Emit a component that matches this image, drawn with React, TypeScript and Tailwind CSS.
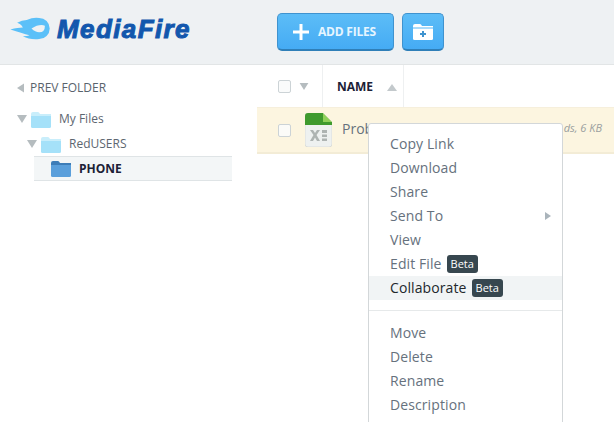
const font = { fontFamily: '"Open Sans", sans-serif' };

function Folder({ color, tab, className }: { color: string; tab: string; className: string }) {
  return (
    <svg viewBox="0 0 20 17" className={className}>
      <path d="M0 3 Q0 1 2 1 H7 Q8 1 9 3 H20 V5 H0 Z" fill={tab} />
      <path d="M0 5 H20 V15.5 Q20 17 18.5 17 H1.5 Q0 17 0 15.5 Z" fill={color} />
    </svg>
  );
}

function Down({ className }: { className: string }) {
  return (
    <svg viewBox="0 0 10 8" className={className}>
      <path d="M0 0 H10 L5 8 Z" fill="#b5bcbf" />
    </svg>
  );
}

function Beta() {
  return (
    <span className="ml-[5px] rounded-[3px] bg-[#37474f] px-[4px] h-[18px] leading-[18px] text-[11px] tracking-normal text-white">
      Beta
    </span>
  );
}

function MenuItem({ label, beta, arrow, active }: { label: string; beta?: boolean; arrow?: boolean; active?: boolean }) {
  return (
    <div
      className={`flex items-center h-6 pl-[21px] pr-[11px] text-[14px] tracking-[0.1px] ${
        active ? "bg-[#f1f4f5] text-[#22282c]" : "text-[#66717d]"
      }`}
    >
      <span className="pb-[2px]">{label}</span>
      {beta && <Beta />}
      {arrow && (
        <svg viewBox="0 0 6 8" className="ml-auto w-[6px] h-[8px]">
          <path d="M0 0 L6 4 L0 8 Z" fill="#aab4bb" />
        </svg>
      )}
    </div>
  );
}

export default function App() {
  return (
    <div className="relative w-[614px] h-[422px] overflow-hidden bg-white" style={font}>
      <header className="flex items-center h-[65px] bg-[#eef1f3] border-b border-[#e2e5e6]">
        <div className="flex items-center w-[277px] pl-[10px] pb-[7px]">
          <svg viewBox="0 0 44 24" className="w-[43px] h-[23px] shrink-0">
            <path
              d="M17 3 Q24 0 30 1 A11 11 0 1 1 30 23 Q20 24 13 20 Q18 20 20 19 Q12 17 0 13 Q8 11 13 11 Q11 7 7 6 Q12 3 17 3 Z"
              fill="#5bc0f8"
            />
            <path d="M22 12 Q30 7 36 9 Q36 16 30 16 Q26 16 22 12 Z" fill="#eef1f3" />
          </svg>
          <span
            className="ml-[4px] text-[26px] leading-none font-bold italic text-[#1257ad] tracking-[1.4px]"
            style={{ fontFamily: '"Liberation Sans", sans-serif', WebkitTextStroke: "1px #1257ad" }}
          >
            MediaFire
          </span>
        </div>
        <button className="flex items-center w-[117px] h-[38px] pl-[15px] rounded-[5px] border border-[#3f93cf] border-b-2 border-b-[#2f7fb8] bg-gradient-to-b from-[#5cbdf7] to-[#45abf4] text-white">
          <svg viewBox="0 0 16 16" className="w-[16px] h-[16px]">
            <path d="M6.5 0 H9.5 V6.5 H16 V9.5 H9.5 V16 H6.5 V9.5 H0 V6.5 H6.5 Z" fill="#fff" />
          </svg>
          <span className="ml-[9px] text-[12px] font-bold text-[#e6f5ff] tracking-[-0.2px]">ADD FILES</span>
        </button>
        <button className="flex items-center justify-center ml-2 w-[42px] h-[38px] rounded-[5px] border border-[#3f93cf] border-b-2 border-b-[#2f7fb8] bg-gradient-to-b from-[#5cbdf7] to-[#45abf4]">
          <svg viewBox="0 0 20 17" className="w-[20px] h-[17px]">
            <path d="M0 3 Q0 1 2 1 H7 Q8 1 9 3 H20 V4.5 H0 Z" fill="#fff" />
            <path d="M0 5.5 H20 V15.5 Q20 17 18.5 17 H1.5 Q0 17 0 15.5 Z" fill="#fff" />
            <path d="M9 8 H11 V10 H13 V12 H11 V14 H9 V12 H7 V10 H9 Z" fill="#3f93cf" />
          </svg>
        </button>
      </header>

      <div className="flex">
        <aside className="w-[257px] shrink-0 pt-[15px] text-[#5d6670]">
          <div className="flex items-center h-4 pl-[17px] text-[12px] text-[#59636c]">
            <svg viewBox="0 0 7 9" className="w-[7px] h-[10px]">
              <path d="M7 0 V9 L0 4.5 Z" fill="#b5bcbf" />
            </svg>
            <span className="ml-[6px]">PREV FOLDER</span>
          </div>
          <div className="flex items-center h-5 mt-[13px] pl-[17px] text-[12px]">
            <Down className="w-[10px] h-[8px]" />
            <Folder color="#a5e1f9" tab="#c9eefb" className="ml-[4px] w-[20px] h-[17px]" />
            <span className="ml-2">My Files</span>
          </div>
          <div className="flex items-center h-5 mt-[5px] pl-[27px] text-[12px]">
            <Down className="w-[10px] h-[8px]" />
            <Folder color="#a5e1f9" tab="#c9eefb" className="ml-[4px] w-[20px] h-[17px]" />
            <span className="ml-2">RedUSERS</span>
          </div>
          <div className="flex items-center h-[25px] ml-[34px] mr-[25px] mt-[2px] pl-[17px] bg-[#f3f6f7] border-y border-[#dfe4e6]">
            <Folder color="#5a9fdb" tab="#3d7db8" className="w-[20px] h-[17px]" />
            <span className="ml-2 text-[12px] font-bold text-[#1c2136]">PHONE</span>
          </div>
        </aside>

        <main className="flex-1 min-w-0">
          <div className="flex items-center h-[42px]">
            <div className="flex items-center w-[66px] h-full pl-[21px] border-r border-[#eef0f1]">
              <span className="w-[13px] h-[13px] rounded-[2px] border border-[#ccd3d6] bg-[#fafbfb]" />
              <Down className="ml-2 w-[10px] h-[7px]" />
            </div>
            <div className="flex items-center w-[81px] h-full pl-[14px] pt-[2px] border-r border-[#eef0f1]">
              <span className="text-[12px] font-bold text-[#1c2136]">NAME</span>
              <svg viewBox="0 0 10 7" className="ml-[14px] w-[10px] h-[7px]">
                <path d="M5 0 L10 7 H0 Z" fill="#c3c9cc" />
              </svg>
            </div>
          </div>
          <div className="flex items-center h-[47px] pl-[21px] pr-[12px] bg-[#fcf5e0] border-y border-[#f6efdc] border-b-2 border-b-[#f3ecd6]">
            <span className="w-[13px] h-[13px] rounded-[2px] border border-[#ccd3d6] bg-[#fbfbf8]" />
            <svg viewBox="0 0 27 34" className="ml-[14px] w-[27px] h-[34px]">
              <path d="M3 0 H18 L27 9 V31 Q27 34 24 34 H3 Q0 34 0 31 V3 Q0 0 3 0 Z" fill="#eef1f0" stroke="#c5cbc9" strokeWidth="0.5" />
              <path d="M3 0 H18 L18 9 H27 V12 H0 V3 Q0 0 3 0 Z" fill="#3f9a2e" />
              <path d="M18 0 L27 9 H18 Z" fill="#8fd05a" />
              <path d="M5 17 H8 L10 20 L12 17 H15 L11.5 22 L15 28 H12 L10 24.5 L8 28 H5 L8.5 22 Z" fill="#aeb4b2" />
              <path d="M17 17 H22 V20 H17 Z M17 21.5 H22 V24 H17 Z M17 25.5 H22 V28 H17 Z" fill="#aeb4b2" />
            </svg>
            <span className="ml-[10px] pb-[3px] text-[14px] text-[#66717d] whitespace-nowrap">Problem_collection.xlsx</span>
            <span className="ml-auto pb-[3px] text-[11px] italic text-[#9a9f9f] whitespace-nowrap">ds, 6 KB</span>
          </div>
        </main>
      </div>

      <div className="absolute left-[368px] top-[123px] w-[195px] h-[320px] bg-white border border-[#d3d7d9] rounded-t-[3px] pt-[8px]">
        <MenuItem label="Copy Link" />
        <MenuItem label="Download" />
        <MenuItem label="Share" />
        <MenuItem label="Send To" arrow />
        <MenuItem label="View" />
        <MenuItem label="Edit File" beta />
        <MenuItem label="Collaborate" beta active />
        <div className="mt-[10px] mb-[10px] border-t border-[#e6e9ea]" />
        <MenuItem label="Move" />
        <MenuItem label="Delete" />
        <MenuItem label="Rename" />
        <MenuItem label="Description" />
      </div>
    </div>
  );
}
